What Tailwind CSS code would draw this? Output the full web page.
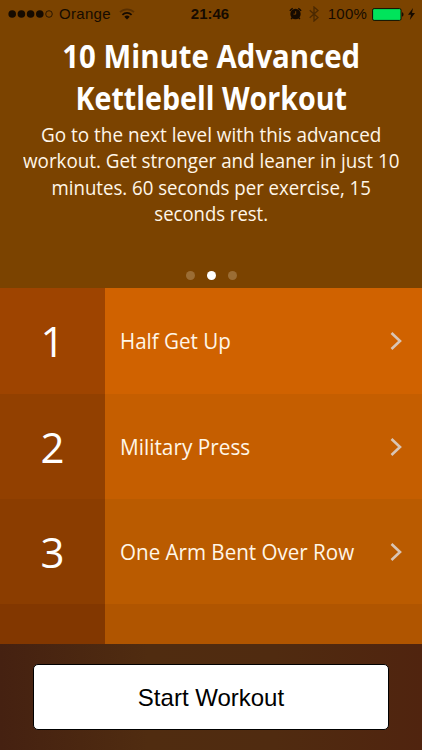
<!DOCTYPE html>
<html lang="en">
  <head>
    <meta charset="utf-8" />
    <title>10 Minute Advanced Kettlebell Workout</title>
    <meta name="viewport" content="width=device-width, initial-scale=1" />
    <script src="https://cdn.jsdelivr.net/npm/@tailwindcss/browser@4"></script>
  </head>

  <body class="h-[750px] w-[422px] overflow-hidden flex flex-col bg-[#7b4300] font-['Open_Sans','Noto_Sans',sans-serif] text-[#fff6e8]">
    <!-- Status bar -->
    <div class="h-7 shrink-0 grid grid-cols-[1fr_60px_1fr] items-center pl-2 pr-[7px] font-['Liberation_Sans',sans-serif] text-[15px] text-[#160b00]">
      <div class="flex items-center">
        <svg class="w-[46px] h-[10px] mr-[5px]" viewBox="0 0 46 10" fill="currentColor">
          <circle cx="4.2" cy="5" r="3.8" />
          <circle cx="13.4" cy="5" r="3.8" />
          <circle cx="22.6" cy="5" r="3.8" />
          <circle cx="31.8" cy="5" r="3.8" />
          <circle cx="41" cy="5" r="3.3" fill="none" stroke="currentColor" stroke-width=".8" />
        </svg>
        <span class="tracking-[0.3px]">Orange</span>
        <svg class="w-4 h-3 ml-2 shrink-0" viewBox="0 0 16 12" fill="none" stroke="currentColor" stroke-width="1.8">
          <path d="M1 4.2a10 10 0 0 1 14 0" opacity=".35" />
          <path d="M3.4 6.8a6.6 6.6 0 0 1 9.2 0" />
          <path d="M8 11.5 5.3 8.8a3.8 3.8 0 0 1 5.4 0z" fill="currentColor" stroke="none" />
        </svg>
      </div>
      <div class="-ml-[3px] text-center font-bold">21:46</div>
      <div class="flex items-center justify-end">
        <svg class="w-[13px] h-[13px] mr-[7px] -mt-px shrink-0" viewBox="0 0 14 14">
          <circle cx="7" cy="7.5" r="5.6" fill="currentColor" />
          <path d="M1 4.2A8 8 0 0 1 4 1.4M10 1.4a8 8 0 0 1 3 2.8M3.5 11.5 2.3 13M10.5 11.5l1.2 1.5" fill="none" stroke="currentColor" stroke-width="1.6" />
          <path d="M7.2 4.5v3.2H4.8" fill="none" stroke="#7b4300" stroke-width="1" />
        </svg>
        <svg class="w-[10px] h-4 mr-[9px] shrink-0 text-[#4b2900]" viewBox="0 0 10 16" fill="none" stroke="currentColor" stroke-width="1.3">
          <path d="M.7 4.2 9 11.5 5 15V1l4 3.5L.7 11.8" />
        </svg>
        <span class="tracking-[0.2px]">100%</span>
        <svg class="w-8 h-[13px] ml-[5px] shrink-0" viewBox="0 0 32 13">
          <rect x=".6" y=".6" width="28.4" height="11.8" rx="1.5" fill="#00e45b" stroke="currentColor" stroke-width="1" />
          <path d="M30 4.3c2 .6 2 3.8 0 4.4z" fill="currentColor" />
        </svg>
        <svg class="w-[7px] h-3 ml-1 shrink-0" viewBox="0 0 7 12" fill="currentColor">
          <path d="M5 0 0 6.7h3L1.8 12 7 5H4z" />
        </svg>
      </div>
    </div>

    <!-- Workout summary -->
    <div class="h-[260px] shrink-0 flex flex-col items-center pt-[7px] whitespace-nowrap">
      <h1 class="text-[32px] leading-[42px] font-bold text-white text-center">
        <span class="block scale-x-[0.918]">10 Minute Advanced</span>
        <span class="block scale-x-[0.895]">Kettlebell Workout</span>
      </h1>
      <p class="mt-[3px] text-[20px] leading-[26.4px] font-medium text-center">
        <span class="block scale-x-[0.945]">Go to the next level with this advanced</span>
        <span class="block scale-x-[0.94]">workout. Get stronger and leaner in just 10</span>
        <span class="block scale-x-[0.932]">minutes. 60 seconds per exercise, 15</span>
        <span class="block scale-x-[0.925]">seconds rest.</span>
      </p>
      <div class="mt-auto mb-2 flex gap-3">
        <span class="size-[9px] rounded-full bg-[#9b6d34]"></span>
        <span class="size-[9px] rounded-full bg-white"></span>
        <span class="size-[9px] rounded-full bg-[#9b6d34]"></span>
      </div>
    </div>

    <!-- Exercises -->
    <div class="h-[356px] shrink-0 overflow-hidden">
      <div class="h-[106px] flex items-center bg-[#d06200]">
        <div class="w-[105px] h-full flex items-center justify-center bg-[#9e4400] pb-0.5 text-[42px] font-medium text-white">1</div>
        <div class="flex-1 pl-[15px] pt-0.5 text-[21px] font-medium whitespace-nowrap"><span class="inline-block origin-left scale-x-[0.98]">Half Get Up</span></div>
        <svg class="w-3 h-[18px] mr-5" viewBox="0 0 12 18" fill="none" stroke="#d9c5b5" stroke-width="2.6"><path d="m1.5 1 8.5 8-8.5 8" /></svg>
      </div>
      <div class="h-[105px] flex items-center bg-[#c55e00]">
        <div class="w-[105px] h-full flex items-center justify-center bg-[#924000] text-[42px] font-medium text-white">2</div>
        <div class="flex-1 pl-[15px] pt-0.5 text-[21px] font-medium whitespace-nowrap"><span class="inline-block origin-left scale-x-[0.99]">Military Press</span></div>
        <svg class="w-3 h-[18px] mr-5" viewBox="0 0 12 18" fill="none" stroke="#d9c5b5" stroke-width="2.6"><path d="m1.5 1 8.5 8-8.5 8" /></svg>
      </div>
      <div class="h-[105px] flex items-center bg-[#ba5b00]">
        <div class="w-[105px] h-full flex items-center justify-center bg-[#8b3d00] text-[42px] font-medium text-white">3</div>
        <div class="flex-1 pl-[15px] pt-0.5 text-[21px] font-medium whitespace-nowrap"><span class="inline-block origin-left scale-x-[0.98]">One Arm Bent Over Row</span></div>
        <svg class="w-3 h-[18px] mr-5" viewBox="0 0 12 18" fill="none" stroke="#d9c5b5" stroke-width="2.6"><path d="m1.5 1 8.5 8-8.5 8" /></svg>
      </div>
      <div class="h-[105px] flex items-center bg-[#b05500]">
        <div class="w-[105px] h-full flex items-center justify-center bg-[#823700] pt-0.5 pl-1.5 text-[42px] font-medium text-white">4</div>
      </div>
    </div>

    <!-- Start button -->
    <div class="h-[106px] shrink-0 px-[33px] pt-5 bg-[linear-gradient(to_right,#452111,#502c10_35%,#502b10_65%,#50240f)]">
      <button class="w-full h-[66px] rounded-[5px] border border-black bg-white pt-0.5 font-['Liberation_Sans',sans-serif] text-2xl text-black" type="button">
        Start Workout
      </button>
    </div>
  </body>
</html>
